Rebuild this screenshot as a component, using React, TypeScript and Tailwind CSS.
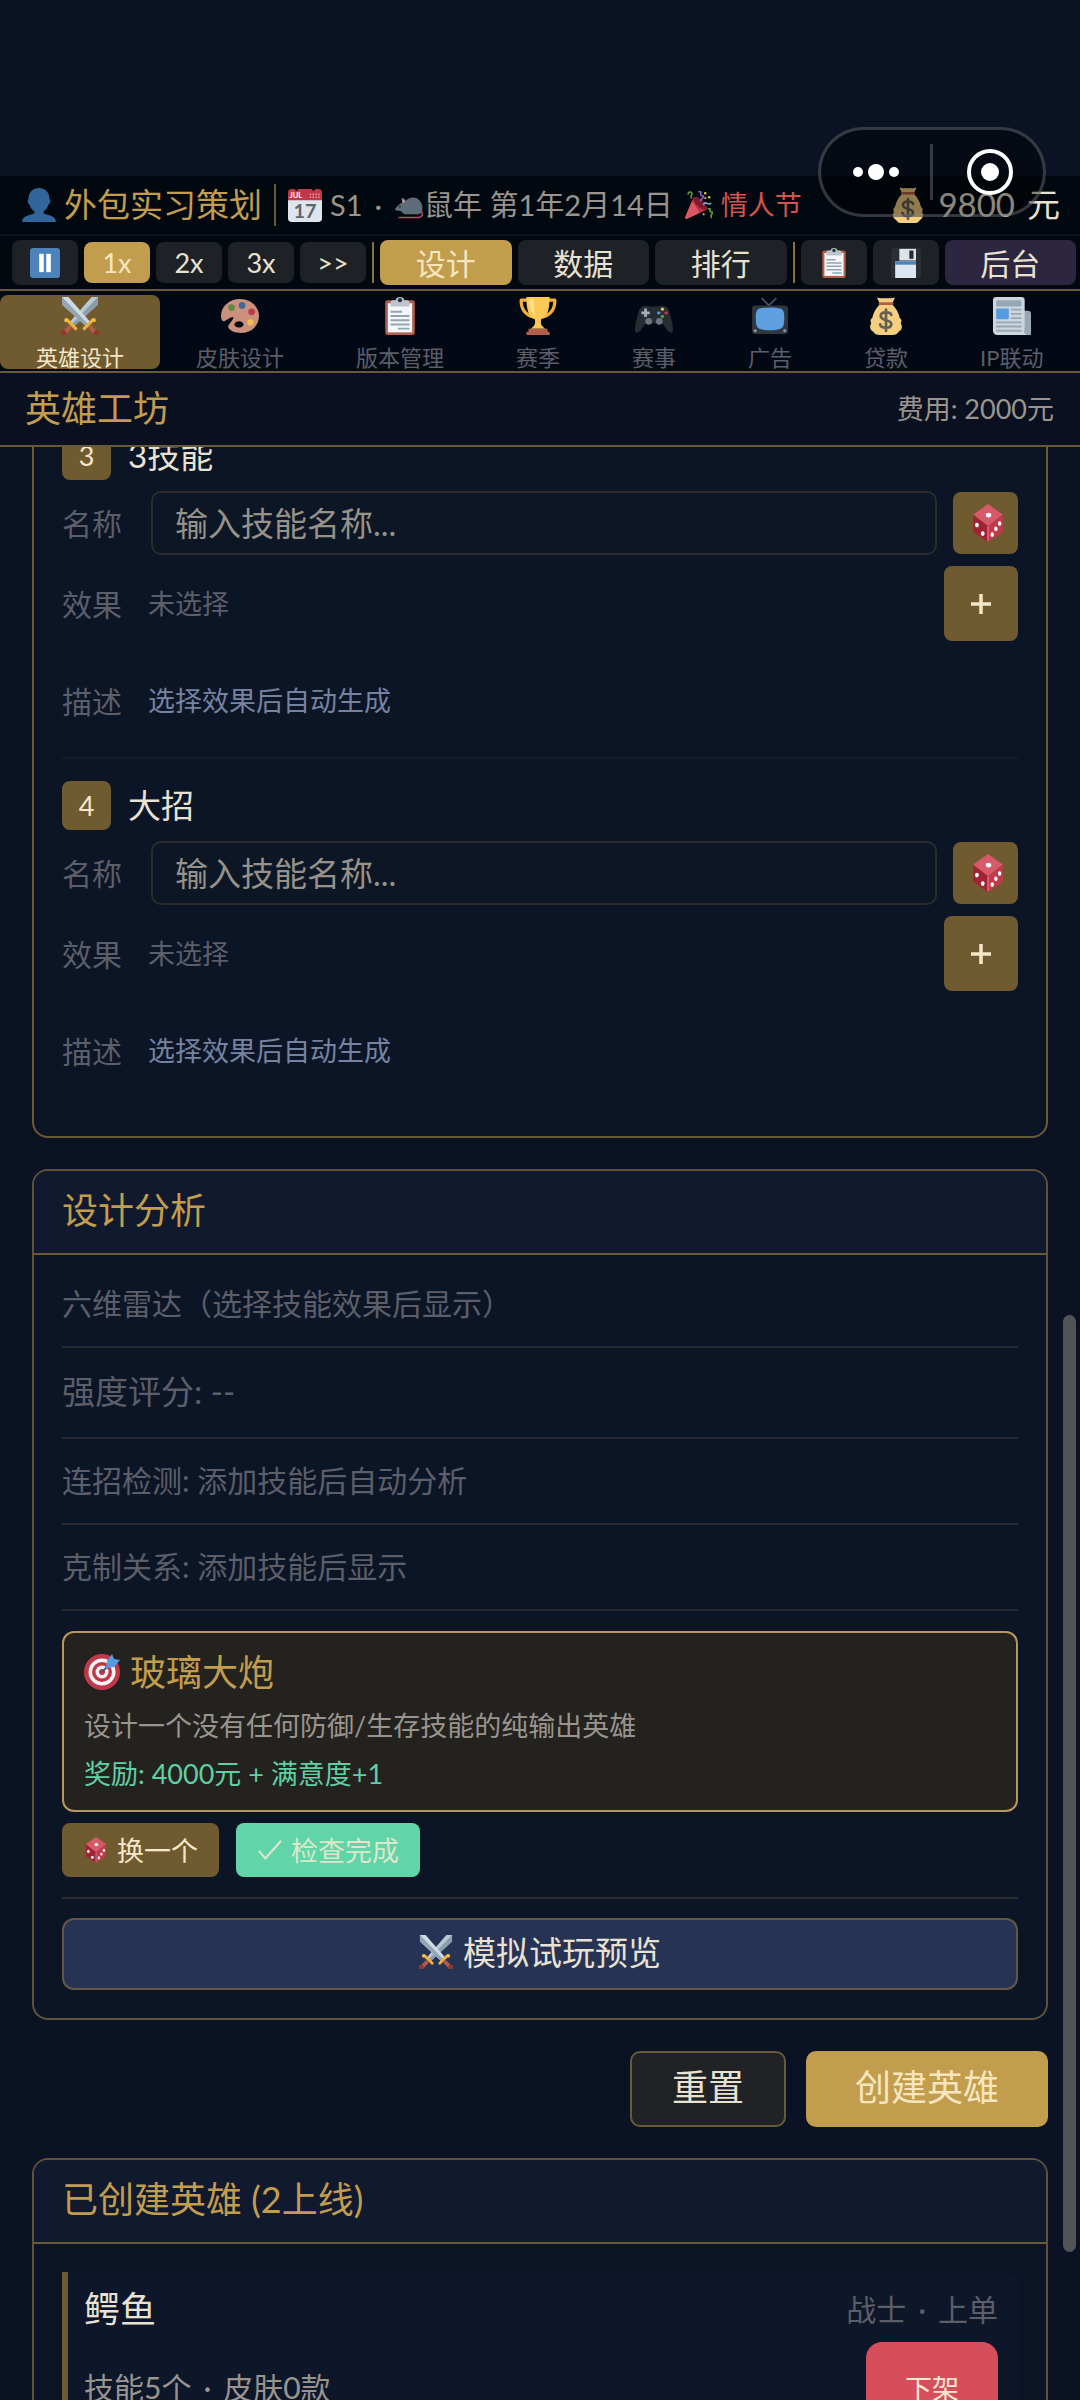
import { useState } from "react";
import type { ComponentType, ReactNode } from "react";

interface IconProps {
  className?: string;
}

function SvgIcon({ className, children }: { className?: string; children: ReactNode }) {
  return (
    <svg viewBox="0 0 36 36" className={`shrink-0 ${className ?? ""}`} aria-hidden="true">
      {children}
    </svg>
  );
}

function UserIcon({ className }: IconProps) {
  return (
    <SvgIcon className={className}>
      <path
        fill="#32669a"
        d="M18 0c6.500 0 11 4.500 11 11 0 1 1 1 1 3s-1 3.500-2 3.500c-.8 3.500-2.500 5.500-5 7v2.500c3 1.500 13 2 13 9H0c0-7 10-7.500 13-9v-2.500c-2.500-1.500-4.200-3.500-5-7-1 0-2-1.500-2-3.500s1-2 1-3C7 4.500 11.500 0 18 0z"
      />
    </SvgIcon>
  );
}

function CalendarIcon({ className }: IconProps) {
  return (
    <SvgIcon className={className}>
      <path fill="#dfe5ec" d="M0 11h36v21a4 4 0 0 1-4 4H4a4 4 0 0 1-4-4z" />
      <path fill="#c13849" d="M0 5a4 4 0 0 1 4-4h28a4 4 0 0 1 4 4v8H0z" />
      <g fill="#02080f">
        <circle cx="9" cy="1" r="1.800" />
        <circle cx="27" cy="1" r="1.800" />
      </g>
      <text x="1.500" y="11" fontSize="8" fontWeight="700" fill="#fff" fontFamily="Lato, sans-serif">
        JUL
      </text>
      <g fill="#e9a3ac">
        {[23, 26, 29, 32].map((x) => (
          <g key={x}>
            <rect x={x} y="6" width="1.500" height="1.500" />
            <rect x={x} y="9" width="1.500" height="1.500" />
          </g>
        ))}
      </g>
      <text x="18" y="32" fontSize="21" fontWeight="700" textAnchor="middle" fill="#5c666f" fontFamily="Lato, sans-serif">
        17
      </text>
    </SvgIcon>
  );
}

function RatIcon({ className }: IconProps) {
  return (
    <SvgIcon className={className}>
      <path d="M6 33h23c6 0 6-6 3-9" fill="none" stroke="#c04a5c" strokeWidth="1.800" strokeLinecap="round" />
      <path
        fill="#5f6d78"
        d="M1 23c3-4 6-7 9-8l-1-5c2-1 4 1 5 3 4-5 13-6 17 0 4 5 4 12 1 15-2 2-5 1-8 1H13c-2 0-3-3-6-4-2 0-5 0-6-2z"
      />
      <path fill="#c9a0a8" d="M10 11c2 0 3 2 3 4h-3z" />
      <circle cx="7" cy="20" r="1" fill="#222" />
    </SvgIcon>
  );
}

function PartyIcon({ className }: IconProps) {
  return (
    <SvgIcon className={className}>
      <path fill="#b83445" d="M0 34 11 8c6 2 14 10 17 16L2 36c-1 0-2-1-2-2z" />
      <path fill="#de5565" d="M0 34 9 13l10 15L2 36c-1 0-2-1-2-2z" />
      <path fill="#7a1c2c" d="M11 8c3-2 8 0 12 5s7 9 5 11c-3 1-8-1-12-5s-6-8-5-11z" />
      <g fill="none" strokeWidth="2" strokeLinecap="round">
        <path d="M4 4c0-4 6-3 5 0s-2 2-1 5" stroke="#5f9d3f" />
        <path d="M18 1c5-1 0 5 4 5s0 4-2 6" stroke="#8b6cc2" />
        <path d="M24 17c3-5 5 2 9-1" stroke="#7faedb" />
        <path d="M30 23c6-1-1 4 4 4s-3 4 0 7" stroke="#5f9d3f" />
      </g>
      <g fill="#eac04f">
        <circle cx="26" cy="3" r="1.600" />
        <circle cx="31" cy="8" r="1.600" />
        <circle cx="26" cy="9" r="1.300" />
        <circle cx="24" cy="30" r="1.300" />
      </g>
    </SvgIcon>
  );
}

function MoneyBagIcon({ className }: IconProps) {
  return (
    <SvgIcon className={className}>
      <path
        fill="#f4cf80"
        d="M10 0c1 2 2 0 3.500 1.500C15 0 16 2 18 1c2 1 3-1 4.500.5C24 0 25 2 26 0c1 2-2 4-2 7 4 4 6 8 7 13 2 1 2 3 1 5 2 3 1 6-2 8-2 3-4 3-6 3H12c-2 0-4 0-6-3-3-2-4-5-2-8-1-2-1-4 1-5 1-5 3-9 7-13 0-3-3-5-2-7z"
      />
      <rect x="11" y="5" width="14" height="2.500" rx="1" fill="#b45c4b" />
      <path
        d="M23 17c0-3-10-4-10 1 0 5 10 3 10 7.500 0 5-10 4.500-10.500.5M18 12v20"
        fill="none"
        stroke="#666052"
        strokeWidth="2.600"
        strokeLinecap="round"
      />
    </SvgIcon>
  );
}

function PauseIcon({ className }: IconProps) {
  return (
    <SvgIcon className={className}>
      <rect width="36" height="36" rx="4" fill="#4b83ba" />
      <rect x="11" y="7" width="5.500" height="22" fill="#fff" />
      <rect x="19.500" y="7" width="5.500" height="22" fill="#fff" />
    </SvgIcon>
  );
}

function ClipboardIcon({ className }: IconProps) {
  return (
    <SvgIcon className={className}>
      <rect x="4" y="3" width="28" height="33" rx="2.500" fill="#b2604c" />
      <rect x="6.500" y="6" width="23" height="27.500" fill="#f4f6f8" />
      <path fill="#bcc5ce" d="M9 9V5c0-2 3-2 5-2 0-4 8-4 8 0 2 0 5 0 5 2v4z" />
      <circle cx="18" cy="3" r="2" fill="#2b3038" />
      <path d="M9 14h11M9 18h18M9 22h18M9 26h18M16 30h11" stroke="#93a5b5" strokeWidth="1.800" />
    </SvgIcon>
  );
}

function FloppyIcon({ className }: IconProps) {
  return (
    <SvgIcon className={className}>
      <rect width="36" height="36" rx="4" fill="#2a2f35" />
      <path d="M10 1h20v14H10z" fill="#dce3ea" />
      <path d="M22 3h5v10h-5z" fill="#272c32" />
      <path d="M5 16h25v20H5z" fill="#dce6f0" />
      <path d="M5 16h25v4H5z" fill="#4b83ba" />
    </SvgIcon>
  );
}

function SwordsIcon({ className }: IconProps) {
  return (
    <SvgIcon className={className}>
      <path fill="#b9c7d3" d="M35 0v7L12 28l-4-4L29 0z" />
      <path fill="#8a9dac" d="M35 0v7L12 28l-2-2z" />
      <path fill="#cfd9e2" d="M1 0v7l23 21 4-4L7 0z" />
      <path fill="#91a5b5" d="M1 0v7l23 21 2-2z" />
      <path d="M6 22l8 8M30 22l-8 8" stroke="#f0ae3a" strokeWidth="3" strokeLinecap="round" />
      <path d="M9 28l-6 6M27 28l6 6" stroke="#b6584a" strokeWidth="4" />
      <circle cx="2.500" cy="34" r="2.500" fill="#8f3a2c" />
      <circle cx="33.500" cy="34" r="2.500" fill="#8f3a2c" />
      <circle cx="5" cy="22" r="2" fill="#f5b942" />
      <circle cx="31" cy="22" r="2" fill="#f5b942" />
    </SvgIcon>
  );
}

function PaletteIcon({ className }: IconProps) {
  return (
    <SvgIcon className={className}>
      <path
        fill="#cb917c"
        fillRule="evenodd"
        d="M18 2C8 2 0 9 0 18c0 3 1 5 3 5 3-1 5-4 9-4-2 6-6 7-5 10 2 4 7 5 12 5 10 0 17-7 17-16S28 2 18 2zm-1 21a4.300 3 0 1 0 .1 0z"
      />
      <circle cx="10" cy="10" r="3.200" fill="#5f8a43" />
      <circle cx="20" cy="8" r="3.200" fill="#3f6a98" />
      <circle cx="29" cy="14" r="3.200" fill="#bf3a48" />
      <circle cx="28" cy="24" r="3" fill="#f2bd50" />
    </SvgIcon>
  );
}

function TrophyIcon({ className }: IconProps) {
  return (
    <SvgIcon className={className}>
      <path
        d="M8 3H2c0 9 4 14 12 16M28 3h6c0 9-4 14-12 16"
        fill="none"
        stroke="#f3ae3d"
        strokeWidth="3"
        strokeLinejoin="round"
      />
      <path fill="#fbc955" d="M7 0h22c0 12-2 19-8 21-1 5 1 7 4 9H11c3-2 5-4 4-9C9 19 7 12 7 0z" />
      <path fill="#fde08c" d="M10 2h4c0 8 0 12 2 16-5-3-6-8-6-16z" />
      <path fill="#b2604c" d="M9 30h18v3h2v3H7v-3h2z" />
    </SvgIcon>
  );
}

function GamepadIcon({ className }: IconProps) {
  return (
    <SvgIcon className={className}>
      <path
        fill="#272c33"
        d="M4 12c3-5 7-4 10-3h8c3-1 7-2 10 3 2 7 4 14 4 19 0 4-3 3-5 1l-5-7H10l-5 7c-2 2-5 3-5-1 0-5 2-12 4-19z"
      />
      <path d="M10 11v8M6 15h8" stroke="#a4aeb7" strokeWidth="2.600" />
      <circle cx="13" cy="23" r="3.200" fill="#6b7680" />
      <circle cx="23" cy="23" r="3.200" fill="#6b7680" />
      <circle cx="26" cy="11.500" r="1.600" fill="#eac04f" />
      <circle cx="26" cy="18.500" r="1.600" fill="#5f9d3f" />
      <circle cx="22.500" cy="15" r="1.600" fill="#559be0" />
      <circle cx="29.500" cy="15" r="1.600" fill="#cb3a4c" />
    </SvgIcon>
  );
}

function TvIcon({ className }: IconProps) {
  return (
    <SvgIcon className={className}>
      <path d="m10 1 7 7 7-7" fill="none" stroke="#4a525a" strokeWidth="1.600" />
      <rect x="1" y="8" width="34" height="27" rx="3" fill="#2f373f" />
      <path fill="#5d9fe0" d="M8 11c6-1.500 14-1.500 20 0 3 1 3.500 4 3.500 9s-.5 9-3.500 10c-6 2-14 2-20 0-3-1-3.500-5-3.500-10S5 12 8 11z" />
      <circle cx="4" cy="32" r="1.500" fill="#8d99a4" />
      <circle cx="32" cy="32" r="1.500" fill="#8d99a4" />
    </SvgIcon>
  );
}

function NewsIcon({ className }: IconProps) {
  return (
    <SvgIcon className={className}>
      <path fill="#98a7b5" d="M28 13h5a3 3 0 0 1 3 3v17a3 3 0 0 1-6 2z" />
      <path fill="#ccd6dd" d="M3 0h24a3 3 0 0 1 3 3v30a3 3 0 0 0 3 3H4a4 4 0 0 1-4-4V3a3 3 0 0 1 3-3z" />
      <rect x="3" y="3" width="24" height="6" rx="1.500" fill="#98a7b5" />
      <rect x="3" y="11" width="12" height="10" rx="1" fill="#559be0" />
      <path d="M17 12h10M17 16h10M17 20h10M3 24h24M3 28h24M3 32h24" stroke="#98a7b5" strokeWidth="1.800" />
    </SvgIcon>
  );
}

function DiceIcon({ className }: IconProps) {
  return (
    <SvgIcon className={className}>
      <path fill="#d8596a" d="M18 0 32 10 18 21 4 10z" />
      <path fill="#a22234" d="M4 10.500 18 21v15L5 27q-1-1-1-2z" />
      <path fill="#c13a4c" d="M32 10.500 18 21v15l13-9q1-1 1-2z" />
      <path d="M18 21v14" stroke="#e88a96" strokeWidth="1" />
      <g fill="#fff">
        <ellipse cx="18.500" cy="10.500" rx="2.600" ry="2.300" />
        <ellipse cx="7.500" cy="20" rx="1.800" ry="2.200" />
        <ellipse cx="13" cy="28" rx="1.800" ry="2.200" />
        <ellipse cx="29" cy="18.500" rx="1.600" ry="2.200" />
        <ellipse cx="25.500" cy="23.500" rx="1.600" ry="2.200" />
        <ellipse cx="22" cy="29" rx="1.600" ry="2.200" />
      </g>
    </SvgIcon>
  );
}

function TargetIcon({ className }: IconProps) {
  return (
    <SvgIcon className={className}>
      <circle cx="18" cy="18" r="18" fill="#c2374a" />
      <circle cx="18" cy="18" r="13.500" fill="#f5f5f5" />
      <circle cx="18" cy="18" r="10" fill="#c2374a" />
      <circle cx="18" cy="18" r="6.500" fill="#f5f5f5" />
      <circle cx="18" cy="18" r="3" fill="#c2374a" />
      <path d="M18 18 27 9" stroke="#31608f" strokeWidth="2" />
      <path fill="#559be0" d="m23 7 5-7 2 5 6 1-6 7-8 1z" />
    </SvgIcon>
  );
}

interface Tab {
  label: string;
  icon: ComponentType<IconProps>;
}

const TABS: Tab[] = [
  { label: "英雄设计", icon: SwordsIcon },
  { label: "皮肤设计", icon: PaletteIcon },
  { label: "版本管理", icon: ClipboardIcon },
  { label: "赛季", icon: TrophyIcon },
  { label: "赛事", icon: GamepadIcon },
  { label: "广告", icon: TvIcon },
  { label: "贷款", icon: MoneyBagIcon },
  { label: "IP联动", icon: NewsIcon },
];

const SPEEDS = ["1x", "2x", "3x", ">>"];
const VIEWS = ["设计", "数据", "排行"];

const SKILLS = [
  { no: 3, title: "3技能" },
  { no: 4, title: "大招" },
];

function Dot() {
  return <span className="mx-3">·</span>;
}

function StatusBar() {
  return (
    <div className="flex h-[60px] items-center border-b-2 border-[#0d1419] bg-[#02080f] pr-5 pl-[22px] whitespace-nowrap">
      <UserIcon className="mr-2 h-[34px] w-[34px]" />
      <span className="text-[33px] text-[#c19d4d]">外包实习策划</span>
      <span className="mx-3 h-[42px] w-0.5 bg-[#6b5630]" />
      <CalendarIcon className="mr-2 h-[34px] w-[34px]" />
      <span className="flex items-center text-[29px] text-[#99958e]">
        S1
        <Dot />
        <RatIcon className="h-[30px] w-[30px]" />
        鼠年 第1年2月14日
      </span>
      <PartyIcon className="mr-2 ml-3 h-7 w-7" />
      <span className="text-[27px] text-[#d5534d]">情人节</span>
      <span className="ml-auto flex items-center gap-3 text-[33px] text-[#e9e2d2]">
        <MoneyBagIcon className="h-9 w-9" />
        <span>9800</span>
        <span>元</span>
      </span>
    </div>
  );
}

function Toolbar() {
  const [speed, setSpeed] = useState("1x");
  const [view, setView] = useState("设计");

  return (
    <div className="flex items-center gap-1.5 border-b-2 border-[#66583a] bg-[#02080f] py-1 pr-1 pl-3 text-[#e9e2d2]">
      <button type="button" aria-label="暂停" className="flex h-[45px] w-[66px] items-center justify-center rounded-lg bg-[#1e2126]">
        <PauseIcon className="h-[30px] w-[30px]" />
      </button>
      {SPEEDS.map((s) => (
        <button
          key={s}
          type="button"
          onClick={() => setSpeed(s)}
          className={`h-[41px] w-[66px] rounded-lg text-[27px] leading-none ${
            s === speed ? "bg-[#c19d4d] text-[#f6e6c0]" : "bg-[#1e2126]"
          }`}
        >
          {s}
        </button>
      ))}
      <span className="h-[41px] w-0.5 bg-[#8a7039]" />
      {VIEWS.map((v) => (
        <button
          key={v}
          type="button"
          onClick={() => setView(v)}
          className={`h-[45px] flex-1 rounded-lg text-[30px] leading-none ${
            v === view ? "bg-[#c19d4d] text-[#f6e6c0]" : "bg-[#1e2126]"
          }`}
        >
          {v}
        </button>
      ))}
      <span className="h-[41px] w-0.5 bg-[#8a7039]" />
      <button type="button" aria-label="任务" className="flex h-[45px] w-[66px] items-center justify-center rounded-lg bg-[#1e2126]">
        <ClipboardIcon className="h-[30px] w-[30px]" />
      </button>
      <button type="button" aria-label="保存" className="flex h-[45px] w-[66px] items-center justify-center rounded-lg bg-[#1e2126]">
        <FloppyIcon className="h-[30px] w-[30px]" />
      </button>
      <button type="button" className="h-[45px] flex-1 rounded-lg bg-[#2c2640] text-[30px] leading-none">
        后台
      </button>
    </div>
  );
}

function TabBar() {
  const [active, setActive] = useState("英雄设计");

  return (
    <nav className="flex overflow-hidden border-b-2 border-[#66583a] bg-[#030914] pt-1 pb-0.5" aria-label="主导航">
      {TABS.map(({ label, icon: Icon }) => (
        <button
          key={label}
          type="button"
          onClick={() => setActive(label)}
          className={`flex h-[74px] shrink-0 flex-col items-center gap-3 rounded-lg px-9 pt-0.5 text-[22px] leading-[22px] ${
            active === label ? "bg-[#705a2f] text-[#f4e7cb]" : "text-[#5c5e69]"
          }`}
        >
          <Icon className="h-[38px] w-[38px]" />
          {label}
        </button>
      ))}
    </nav>
  );
}

function Card({ title, children }: { title: string; children: ReactNode }) {
  return (
    <section className="overflow-hidden rounded-2xl border-2 border-[#5f5239] bg-[#0c1526]">
      <h2 className="border-b-2 border-[#6b5a38] bg-[#10192d] px-7 pt-[17px] pb-[21px] text-[36px] leading-[44px] text-[#c19d4d]">
        {title}
      </h2>
      <div className="p-7">{children}</div>
    </section>
  );
}

function SkillForm({ no, title }: { no: number; title: string }) {
  return (
    <div className="border-b-2 border-[#141d2f] pb-[34px] last:border-transparent">
      <div className="flex items-center gap-[17px]">
        <span className="flex h-[49px] w-[49px] items-center justify-center rounded-lg bg-[#705a2f] text-[27px] leading-none text-[#f4e7cb]">
          {no}
        </span>
        <h3 className="text-[33px] leading-none text-[#e9e2d2]">{title}</h3>
      </div>
      <div className="mt-[11px] flex items-center">
        <label htmlFor={`skill-${no}`} className="w-[89px] shrink-0 text-[30px] leading-[44px] text-[#5c5e69]">
          名称
        </label>
        <input
          id={`skill-${no}`}
          type="text"
          placeholder="输入技能名称..."
          className="h-16 min-w-0 flex-1 rounded-[10px] border-2 border-[#2b2b2e] bg-[#0d1624] px-[22px] text-[33px] text-[#e9e2d2] placeholder:text-[#96928a] placeholder:opacity-100"
        />
        <button type="button" aria-label="随机名称" className="ml-4 flex h-[62px] w-[65px] items-center justify-center rounded-lg bg-[#705a2f] pl-1">
          <DiceIcon className="h-[38px] w-[38px]" />
        </button>
      </div>
      <div className="mt-[11px] flex items-center">
        <span className="w-[86px] shrink-0 text-[30px] leading-[44px] text-[#5c5e69]">效果</span>
        <span className="flex-1 text-[27px] leading-[44px] text-[#5c5e69]">未选择</span>
        <button type="button" aria-label="添加效果" className="flex h-[75px] w-[74px] items-center justify-center rounded-lg bg-[#705a2f]">
          <svg viewBox="0 0 20 20" className="h-5 w-5" aria-hidden="true">
            <path d="M10 0v20M0 10h20" stroke="#f4e7cb" strokeWidth="3.500" />
          </svg>
        </button>
      </div>
      <div className="mt-[38px] flex items-center">
        <span className="w-[86px] shrink-0 text-[30px] leading-[44px] text-[#5c5e69]">描述</span>
        <span className="text-[27px] leading-[44px] text-[#7683a0]">选择效果后自动生成</span>
      </div>
    </div>
  );
}

function AnalysisCard() {
  return (
    <Card title="设计分析">
      <div className="-mt-0.5 text-[30px] leading-[44px] text-[#5c5e69]">
        <p className="border-b-2 border-[#282a31] pb-[21px]">六维雷达（选择技能效果后显示）</p>
        <p className="border-b-2 border-[#282a31] pt-[21px] pb-6 text-[33px]">强度评分: --</p>
        <p className="border-b-2 border-[#282a31] pt-[19px] pb-[21px]">连招检测: 添加技能后自动分析</p>
        <p className="border-b-2 border-[#282a31] pt-[19px] pb-[21px]">克制关系: 添加技能后显示</p>
      </div>

      <div className="mt-5 rounded-xl border-2 border-[#b8985a] bg-[#24221e] px-5 pt-[17px] pb-3">
        <h3 className="flex items-center gap-2.5 text-[36px] leading-[44px] text-[#c19d4d]">
          <TargetIcon className="h-9 w-9" />
          玻璃大炮
        </h3>
        <p className="mt-2 text-[27px] leading-[48px] text-[#99958e]">设计一个没有任何防御/生存技能的纯输出英雄</p>
        <p className="text-[27px] leading-[48px] text-[#60cfa4]">奖励: 4000元 + 满意度+1</p>
      </div>

      <div className="mt-[11px] flex gap-[17px] border-b-2 border-[#2d2c2f] pb-5 text-[27px] leading-none">
        <button type="button" className="flex h-[54px] items-center gap-2 rounded-lg bg-[#705a2f] px-[21px] text-[#f4e7cb]">
          <DiceIcon className="h-[26px] w-[26px]" />
          换一个
        </button>
        <button type="button" className="flex h-[54px] items-center gap-2 rounded-lg bg-[#62d4a9] px-[21px] text-[#dbe8ca]">
          <svg viewBox="0 0 28 28" className="h-[26px] w-[26px]" aria-hidden="true">
            <path d="m2 15 7 8L26 4" fill="none" stroke="currentColor" strokeWidth="2.200" />
          </svg>
          检查完成
        </button>
      </div>

      <button
        type="button"
        className="mt-[19px] flex h-[72px] w-full items-center justify-center gap-2.5 rounded-xl border-2 border-[#625846] bg-[#263354] pb-1 text-[33px] leading-none text-[#e9e2d2]"
      >
        <SwordsIcon className="h-[34px] w-[34px]" />
        模拟试玩预览
      </button>
    </Card>
  );
}

function HeroRow() {
  return (
    <div className="flex justify-between rounded-r-xl border-l-[6px] border-[#705a2f] bg-[#0e172a] py-[15px] pr-5 pl-4">
      <div>
        <h3 className="text-[36px] leading-[44px] text-[#e9e2d2]">鳄鱼</h3>
        <p className="mt-[34px] text-[30px] leading-[44px] text-[#99958e]">
          技能5个
          <Dot />
          皮肤0款
        </p>
      </div>
      <div className="flex flex-col items-end gap-[11px]">
        <span className="text-[30px] leading-[44px] text-[#5c5e69]">
          战士
          <Dot />
          上单
        </span>
        <button type="button" className="h-[92px] w-[132px] rounded-2xl bg-[#d64d5b] text-[27px] leading-none text-[#f6e6d4]">
          下架
        </button>
      </div>
    </div>
  );
}

// Floating mini program controls in the top right corner
function Capsule() {
  return (
    <div className="absolute top-[127px] right-[34px] flex h-[90px] w-[228px] items-center rounded-full border-[3px] border-[#80828a]/40 bg-black/40">
      <button type="button" aria-label="更多" className="flex w-[109px] items-center justify-center gap-[5px]">
        <span className="h-2.5 w-2.5 rounded-full bg-white" />
        <span className="h-4 w-4 rounded-full bg-white" />
        <span className="h-2.5 w-2.5 rounded-full bg-white" />
      </button>
      <span className="h-14 w-[3px] bg-[#80828a]/40" />
      <button type="button" aria-label="关闭" className="flex flex-1 justify-center pl-1">
        <span className="flex h-[46px] w-[46px] items-center justify-center rounded-full border-4 border-white">
          <span className="h-[18px] w-[18px] rounded-full bg-white" />
        </span>
      </button>
    </div>
  );
}

export default function App() {
  return (
    <div className="relative flex h-screen flex-col overflow-hidden bg-[#0a1224] pt-44 font-[Lato,'Noto_Sans_CJK_SC',sans-serif] font-normal">
      <StatusBar />
      <Toolbar />
      <TabBar />
      <header className="flex h-[74px] shrink-0 items-center justify-between border-b-2 border-[#66583a] bg-[#0b1020] pr-[26px] pb-0.5 pl-[25px]">
        <h1 className="text-[36px] leading-none text-[#c19d4d]">英雄工坊</h1>
        <span className="text-[27px] leading-none text-[#99958e]">费用: 2000元</span>
      </header>

      <main className="relative min-h-0 flex-1 overflow-hidden px-8">
        <div className="-mt-10 flex flex-col gap-[31px]">
          <section className="flex flex-col gap-[22px] rounded-2xl border-2 border-[#6b5a38] bg-[#0c1526] px-7 pt-[22px] pb-[27px]">
            {SKILLS.map((skill) => (
              <SkillForm key={skill.no} {...skill} />
            ))}
          </section>

          <AnalysisCard />

          <div className="flex justify-end gap-5 text-[36px] leading-none">
            <button type="button" className="h-[76px] rounded-[10px] border-2 border-[#675a3c] bg-[#202226] px-10 pb-1 text-[#e9e2d2]">
              重置
            </button>
            <button type="button" className="h-[76px] rounded-[10px] bg-[#c19d4d] px-[49px] pb-1 text-[#f6e6c0]">
              创建英雄
            </button>
          </div>

          <Card title="已创建英雄 (2上线)">
            <HeroRow />
          </Card>
        </div>
        <div className="absolute top-[calc(100%*4/9)] right-1 h-[48%] w-[13px] rounded-full bg-[#515358]" />
      </main>

      <Capsule />
    </div>
  );
}
